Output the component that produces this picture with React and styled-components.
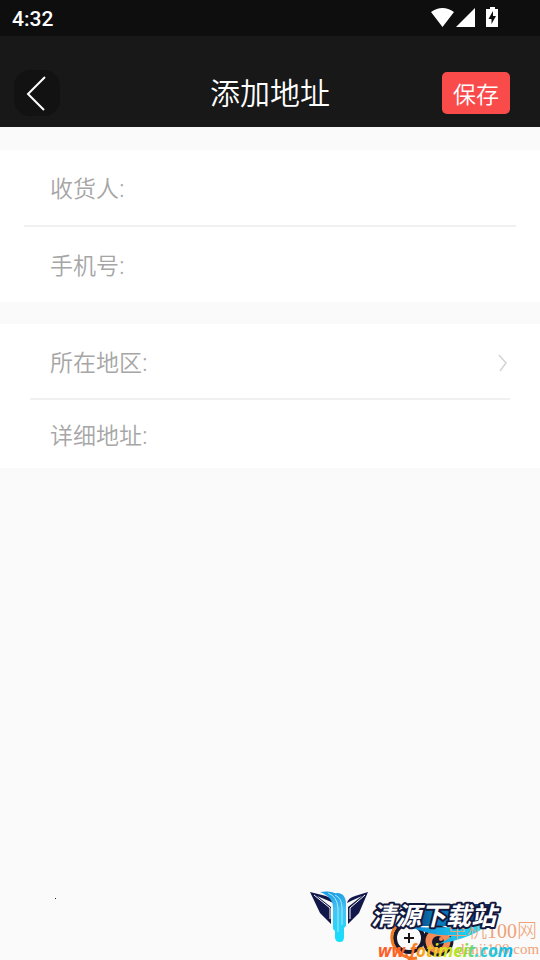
import React from 'react';
import styled, { createGlobalStyle } from 'styled-components';

const Global = createGlobalStyle`
  * { box-sizing: border-box; }
  body { margin: 0; background: #fafafa; font-family: Roboto, "Noto Sans CJK SC", sans-serif; }
  button, input { font: inherit; }
`;

const Screen = styled.div`
  display: flex;
  flex-direction: column;
  min-height: 100vh;
  background: #fafafa;
`;

const StatusBar = styled.div`
  display: flex;
  align-items: center;
  justify-content: space-between;
  height: 36px;
  padding: 0 40px 0 12px;
  background: #0e0e0e;
  color: #fff;
`;

const Clock = styled.time`
  padding-top: 2px;
  font-size: 21px;
  font-weight: 500;
  line-height: 24px;
`;

const StatusIcons = styled.svg`
  display: block;
  width: 69px;
  height: 24px;
`;

const Header = styled.header`
  display: grid;
  grid-template-columns: 1fr auto 1fr;
  align-items: center;
  height: 91px;
  padding: 23px 30px 0 14px;
  background: #181818;
  color: #fff;
`;

const BackButton = styled.button`
  display: grid;
  place-items: center;
  width: 46px;
  height: 46px;
  padding: 0;
  border: 0;
  border-radius: 16px;
  background: #121212;
  color: #fff;
`;

const Title = styled.h1`
  margin: 0;
  padding: 0 0 4px 16px;
  font-family: "Noto Sans CJK SC", sans-serif;
  font-size: 30px;
  font-weight: 350;
  line-height: 44px;
`;

const SaveButton = styled.button`
  justify-self: end;
  width: 68px;
  height: 42px;
  padding: 0;
  border: 0;
  border-radius: 5px;
  background: #fa4b4b;
  color: #fff;
  font-family: "Noto Sans CJK SC", sans-serif;
  font-size: 23px;
  font-weight: 350;
  line-height: 42px;
`;

const Form = styled.form`
  display: flex;
  flex-direction: column;
  gap: 22px;
  padding-top: 23px;
`;

const Group = styled.div`
  background: #fff;
`;

const Row = styled.div`
  display: flex;
  align-items: center;
  height: ${(p) => p.$height}px;
  padding: 1px 31px 0 50px;
`;

const Divider = styled.hr`
  height: 2px;
  margin: 0 ${(p) => p.$inset}px;
  border: 0;
  background: #f0f0f0;
`;

const Label = styled.label`
  flex: none;
  color: #a6a6a6;
  font-family: "Noto Sans", "Noto Sans CJK SC", sans-serif;
  font-size: 23px;
  font-weight: 350;
  line-height: 34px;
`;

const Field = styled.input`
  flex: 1;
  min-width: 0;
  height: 44px;
  padding: 0 8px;
  border: 0;
  outline: 0;
  background: transparent;
  color: #333;
  font-size: 23px;
`;

const RegionButton = styled.button`
  display: flex;
  flex: 1;
  align-items: center;
  justify-content: flex-end;
  height: 44px;
  padding: 0;
  border: 0;
  background: transparent;
  color: #d4d4d4;
`;

const Footer = styled.footer`
  display: flex;
  align-items: flex-end;
  justify-content: space-between;
  margin-top: auto;
  padding-left: 55px;
`;

const Speck = styled.span`
  width: 1px;
  height: 1px;
  margin-bottom: 61px;
  background: #222;
`;

const Marks = styled.svg`
  display: block;
  width: 235px;
  height: 75px;
`;

function BackIcon() {
  return (
    <svg width="22" height="36" viewBox="0 0 22 36" fill="none" stroke="currentColor" strokeWidth="2" aria-hidden="true">
      <path d="M19 2 2 19 18 35" />
    </svg>
  );
}

function Watermarks() {
  return (
    <Marks viewBox="305 885 235 75" aria-label="清源下载站">
      <defs>
        <linearGradient id="drip" x1="0" y1="0" x2="0" y2="1">
          <stop offset="0" stopColor="#1b9be4" />
          <stop offset=".35" stopColor="#45c4f4" />
          <stop offset="1" stopColor="#12e0fc" />
        </linearGradient>
        <linearGradient id="panel" x1="0" y1="0" x2="1" y2="0">
          <stop offset="0" stopColor="#0b2350" />
          <stop offset=".35" stopColor="#087ec0" />
          <stop offset=".7" stopColor="#0a5fa8" />
          <stop offset="1" stopColor="#101c42" />
        </linearGradient>
        <linearGradient id="stream" x1="0" y1="0" x2="1" y2="0">
          <stop offset="0" stopColor="#0c7fd0" />
          <stop offset=".6" stopColor="#1cc4ee" />
          <stop offset="1" stopColor="#1fe0f5" />
        </linearGradient>
        <linearGradient id="site" x1="378" y1="0" x2="511" y2="0" gradientUnits="userSpaceOnUse">
          <stop offset="0" stopColor="#ff5927" />
          <stop offset=".24" stopColor="#ff6a24" />
          <stop offset=".34" stopColor="#f6a51b" />
          <stop offset=".48" stopColor="#dfe61c" />
          <stop offset=".65" stopColor="#9be02a" />
          <stop offset=".76" stopColor="#35cfd0" />
          <stop offset="1" stopColor="#13b8ee" />
        </linearGradient>
      </defs>
      <path d="M310 892 326 896Q332 898 333 903L329 901 317 896 331 907V924L320 913Z" fill="#12194a" />
      <path d="M368 892 355 896Q348 898 347 903L351 901 362 896 348 907V924L359 913Z" fill="#12194a" />
      <path d="M314 895 330 908V919" fill="none" stroke="#fafafa" strokeWidth="1" />
      <path d="M365 895 350 908V919" fill="none" stroke="#fafafa" strokeWidth="1" />
      <path d="M320 892C331 890 334 894 338 893 344 894 346 898 346 904V926L344 928V937Q344 942 340 942 335 942 335 937V931L333 929V908Q333 897 320 892Z" fill="url(#drip)" />
      <path d="M328 893Q337 896 338 908V932M335 895Q342 898 342 908V925" fill="none" stroke="#a4e8ff" strokeWidth="1" />
      <path d="M405 904H494L490 926H404Z" fill="url(#panel)" />
      <circle cx="409" cy="938" r="14" fill="#fafafa" stroke="#17182a" strokeWidth="4" />
      <path d="M413 919C396 920 389 932 393 944 397 954 408 960 417 958" fill="none" stroke="#f47a22" strokeWidth="3" />
      <path d="M404 938H414M409 933V943" stroke="#151515" strokeWidth="2" />
      <circle cx="438" cy="941" r="14" fill="#f58b55" stroke="#17182a" strokeWidth="3" />
      <circle cx="438" cy="942" r="6" fill="#17182a" />
      <circle cx="441" cy="939" r="2" fill="#f58b55" />
      <path d="M408 926Q437 930 488 924 474 938 438 944 450 939 452 935 434 937 408 926Z" fill="url(#stream)" />
      <text x="447" y="938" fontFamily="Liberation Serif, Noto Sans CJK SC, serif" fontSize="20" fontWeight="300" fill="#f0a276">单机100网</text>
      <text x="457" y="954" fontFamily="Liberation Serif, serif" fontSize="15" fill="#f0a276">danji100.com</text>
      <text x="371" y="925" fontFamily="Noto Sans CJK SC, sans-serif" fontSize="25" fontWeight="700" fontStyle="italic" fill="#fff" stroke="#12183d" strokeWidth="4" strokeLinejoin="round" paintOrder="stroke">清源下载站</text>
      <text x="378" y="957" fontFamily="Open Sans, sans-serif" fontSize="17" fontWeight="700" fontStyle="italic" fill="url(#site)">ww.fotimeit.com</text>
    </Marks>
  );
}

export default function App() {
  return (
    <Screen>
      <Global />
      <StatusBar>
        <Clock>4:32</Clock>
        <StatusIcons viewBox="0 0 69 24" fill="#fff" aria-hidden="true">
          <path d="M0 6Q11.500-2 23 6L11.500 21ZM25 21 44 2V21ZM55 3H59V1H64V3H67V21H55Z" />
          <path d="M62 5 57.500 13H60.500V18L65 10H62Z" fill="#0e0e0e" />
        </StatusIcons>
      </StatusBar>
      <Header>
        <BackButton type="button" aria-label="返回"><BackIcon /></BackButton>
        <Title>添加地址</Title>
        <SaveButton type="submit" form="address">保存</SaveButton>
      </Header>
      <Form id="address" onSubmit={(e) => e.preventDefault()}>
        <Group>
          <Row $height={75}>
            <Label htmlFor="name">收货人:</Label>
            <Field id="name" />
          </Row>
          <Divider $inset={24} />
          <Row $height={75}>
            <Label htmlFor="phone">手机号:</Label>
            <Field id="phone" type="tel" />
          </Row>
        </Group>
        <Group>
          <Row $height={74}>
            <Label htmlFor="region">所在地区:</Label>
            <RegionButton id="region" type="button">
              <svg width="12" height="20" viewBox="0 0 12 20" fill="none" stroke="currentColor" strokeWidth="1.500" aria-hidden="true">
                <path d="M2 3 9 11 3 19" />
              </svg>
            </RegionButton>
          </Row>
          <Divider $inset={30} />
          <Row $height={68}>
            <Label htmlFor="detail">详细地址:</Label>
            <Field id="detail" />
          </Row>
        </Group>
      </Form>
      <Footer>
        <Speck />
        <Watermarks />
      </Footer>
    </Screen>
  );
}
